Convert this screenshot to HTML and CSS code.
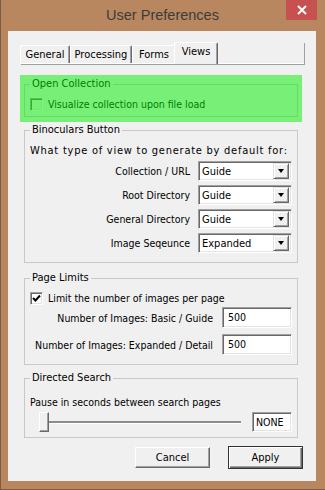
FILE: index.html
```html
<!DOCTYPE html>
<html lang="en">
<head>
  <meta charset="UTF-8">
  <title>User Preferences</title>
  <link rel="stylesheet" href="styles.css">
</head>
<body>

  <div class="window">
    <div class="titlebar">
      <span></span>
      <span class="title">User Preferences</span>
      <button class="close-btn">
        <svg width="10" height="10" viewBox="0 0 10 10"><path d="M1 1 L9 9 M9 1 L1 9" stroke="#fff" stroke-width="2"/></svg>
      </button>
    </div>

    <div class="client">
      <!-- Tabs -->
      <div class="tabs">
        <span class="tab tab-general">General</span>
        <span class="tab tab-processing">Processing</span>
        <span class="tab tab-forms">Forms</span>
        <span class="tab active">Views</span>
      </div>

      <!-- Open Collection (highlighted) -->
      <div class="highlight">
        <fieldset class="group open-group">
          <legend>Open Collection</legend>
          <div class="check-row">
            <span class="checkbox disabled"></span>
            <span>Visualize collection upon file load</span>
          </div>
        </fieldset>
      </div>

      <!-- Binoculars -->
      <fieldset class="group binoculars">
        <legend>Binoculars Button</legend>
        <div class="desc wide">What type of view to generate by default for:</div>
        <div class="field-grid select-grid">
          <span class="field-label">Collection / URL</span>
          <div class="combo"><span class="combo-text">Guide</span><span class="combo-btn"><i class="arrow"></i></span></div>
          <span class="field-label">Root Directory</span>
          <div class="combo"><span class="combo-text">Guide</span><span class="combo-btn"><i class="arrow"></i></span></div>
          <span class="field-label">General Directory</span>
          <div class="combo"><span class="combo-text">Guide</span><span class="combo-btn"><i class="arrow"></i></span></div>
          <span class="field-label">Image Seqeunce</span>
          <div class="combo"><span class="combo-text">Expanded</span><span class="combo-btn"><i class="arrow"></i></span></div>
        </div>
      </fieldset>

      <!-- Page Limits -->
      <fieldset class="group page-limits">
        <legend>Page Limits</legend>
        <div class="check-row">
          <span class="checkbox">
            <svg width="9" height="9" viewBox="0 0 9 9"><path d="M1 4 L3.5 6.5 L8 1.5" fill="none" stroke="#000" stroke-width="2"/></svg>
          </span>
          <span>Limit the number of images per page</span>
        </div>
        <div class="field-grid input-grid">
          <span class="field-label">Number of Images: Basic / Guide</span>
          <div class="textbox">500</div>
          <span class="field-label">Number of Images: Expanded / Detail</span>
          <div class="textbox">500</div>
        </div>
      </fieldset>

      <!-- Directed Search -->
      <fieldset class="group directed">
        <legend>Directed Search</legend>
        <div class="desc">Pause in seconds between search pages</div>
        <div class="slider-row">
          <div class="slider">
            <span class="thumb"></span>
            <span class="track"></span>
          </div>
          <div class="textbox none-box">NONE</div>
        </div>
      </fieldset>

      <div class="actions">
        <button class="btn">Cancel</button>
        <button class="btn default">Apply</button>
      </div>
    </div>
  </div>

</body>
</html>
```

FILE: styles.css
```css
body {
  margin: 0;
  font-family: "DejaVu Sans Condensed", "DejaVu Sans", sans-serif;
  font-stretch: condensed;
  font-size: 10.5px;
  color: #000;
}
.window {
  width: 325px;
  height: 490px;
  background-color: #b9875f;
  box-shadow: inset 1px -1px 0 #7e5c43;
}
.titlebar {
  height: 31px;
  display: grid;
  grid-template-columns: 1fr auto 1fr;
}
.title {
  font-family: "Liberation Sans", Arial, sans-serif;
  font-stretch: normal;
  font-size: 14.5px;
  line-height: 30px;
  color: #3c3c3c;
}
.close-btn {
  justify-self: end;
  width: 31px;
  height: 20px;
  margin-right: 8px;
  padding: 0;
  border: 0;
  background-color: #c75050;
  display: flex;
  align-items: center;
  justify-content: center;
}
.client {
  margin: 0 9px 0 8px;
  height: 450px;
  box-sizing: border-box;
  padding-top: 11px;
  background-color: #f0f0f0;
}

/* tabs */
.tabs {
  display: flex;
  align-items: flex-end;
  margin-left: 12px;
  width: 284px;
  height: 21px;
  border-bottom: 1px solid #fff;
  box-shadow: 1px 1px 0 #a0a0a0;
}
.tab {
  height: 18px;
  box-sizing: border-box;
  line-height: 17px;
  font-size: 11px;
  text-align: center;
  background-color: #f0f0f0;
  border: 1px solid;
  border-color: #fff #696969 transparent #fff;
  border-bottom: 0;
  border-radius: 2px 2px 0 0;
  box-shadow: inset -1px 0 0 #a0a0a0;
}
.tab-general { width: 50px; }
.tab-processing { width: 62px; }
.tab-forms { width: 44px; }
.tab.active {
  width: 44px;
  height: 22px;
  line-height: 18px;
  margin: 0 -2px -1px -2px;
  position: relative;
  z-index: 1;
}

/* group boxes */
.group {
  margin: 0 0 0 16px;
  width: 274px;
  box-sizing: border-box;
  border: 1px solid #c8c8c8;
  min-width: 0;
}
.group legend {
  padding: 0 2px;
  line-height: 16px;
  font-size: 11px;
}
.highlight {
  position: relative;
  margin: 11px 0 0 12px;
  width: 282px;
  box-sizing: border-box;
  padding: 1px 4px 5px;
}
.highlight::after {
  content: "";
  position: absolute;
  top: 0;
  left: 0;
  right: 0;
  bottom: 0;
  background-color: rgba(0, 240, 0, 0.5);
}
.highlight .group {
  margin: 0;
}
.open-group {
  padding: 4px 5px 4px;
}
.binoculars {
  padding: 5px 5px 9px;
}
.page-limits {
  margin-top: 7px;
  padding: 4px 5px 9px;
}
.directed {
  margin-top: 5px;
  padding: 8px 5px 5px;
}
.desc {
  line-height: 16px;
}
.desc.wide {
  font-size: 11px;
  letter-spacing: 0.75px;
}

.check-row {
  display: flex;
  align-items: center;
  gap: 5px;
  height: 16px;
}
.checkbox {
  width: 13px;
  height: 13px;
  box-sizing: border-box;
  border: 1px solid;
  border-color: #a0a0a0 #fff #fff #a0a0a0;
  box-shadow: inset 1px 1px 0 #696969, inset -1px -1px 0 #e3e3e3;
  background-color: #fff;
  display: flex;
  align-items: center;
  justify-content: center;
}
.checkbox.disabled {
  background-color: #f0f0f0;
}

.field-grid {
  display: grid;
  align-items: center;
}
.field-label {
  text-align: right;
  white-space: nowrap;
  min-width: 0;
}
.select-grid {
  grid-template-columns: minmax(0, 1fr) 94px;
  column-gap: 8px;
  row-gap: 4px;
  margin-top: 2px;
}
.input-grid {
  grid-template-columns: minmax(0, 1fr) 70px;
  column-gap: 9px;
  row-gap: 6px;
  margin-top: 1px;
}

/* sunken controls */
.combo,
.textbox {
  box-sizing: border-box;
  background-color: #fff;
  border: 1px solid;
  border-color: #a0a0a0 #fff #fff #a0a0a0;
  box-shadow: inset 1px 1px 0 #696969, inset -1px -1px 0 #e3e3e3;
}
.combo {
  height: 20px;
  display: flex;
  align-items: center;
  padding: 1px 2px 1px 3px;
}
.combo-text {
  flex: 1;
  font-size: 11px;
}
.combo-btn {
  width: 16px;
  height: 16px;
  box-sizing: border-box;
  background-color: #f0f0f0;
  border: 1px solid;
  border-color: #e3e3e3 #696969 #696969 #e3e3e3;
  box-shadow: inset 1px 1px 0 #fff, inset -1px -1px 0 #a0a0a0;
  display: flex;
  align-items: center;
  justify-content: center;
}
.arrow {
  width: 0;
  height: 0;
  border-style: solid;
  border-width: 4px 3.5px 0;
  border-color: #000 transparent transparent;
}
.textbox {
  height: 21px;
  line-height: 19px;
  padding-left: 5px;
}

/* slider */
.slider-row {
  display: flex;
  align-items: center;
  margin-top: 2px;
}
.slider {
  flex: 1;
  display: flex;
  align-items: center;
  margin: 0 11px 0 9px;
}
.thumb {
  width: 10px;
  height: 20px;
  box-sizing: border-box;
  background-color: #f0f0f0;
  border: 1px solid;
  border-color: #fff #696969 #696969 #fff;
  box-shadow: inset -1px -1px 0 #a0a0a0;
}
.track {
  flex: 1;
  height: 2px;
  background-color: #8c8c8c;
  border-bottom: 1px solid #fff;
}
.none-box {
  width: 40px;
  height: 20px;
  line-height: 18px;
  padding-left: 3px;
}

/* buttons */
.actions {
  display: flex;
  justify-content: flex-end;
  align-items: center;
  gap: 18px;
  height: 23px;
  margin-top: 8px;
  padding-right: 13px;
}
.btn {
  width: 75px;
  height: 21px;
  padding: 0;
  font: inherit;
  font-size: 11px;
  color: #000;
  background-color: #f0f0f0;
  border: 1px solid;
  border-color: #fff #696969 #696969 #fff;
  box-shadow: inset -1px -1px 0 #a0a0a0;
}
.btn.default {
  height: 23px;
  border: 1px solid #333;
  box-shadow: inset 1px 1px 0 #fff, inset -1px -1px 0 #696969, inset -2px -2px 0 #a0a0a0;
}
```
